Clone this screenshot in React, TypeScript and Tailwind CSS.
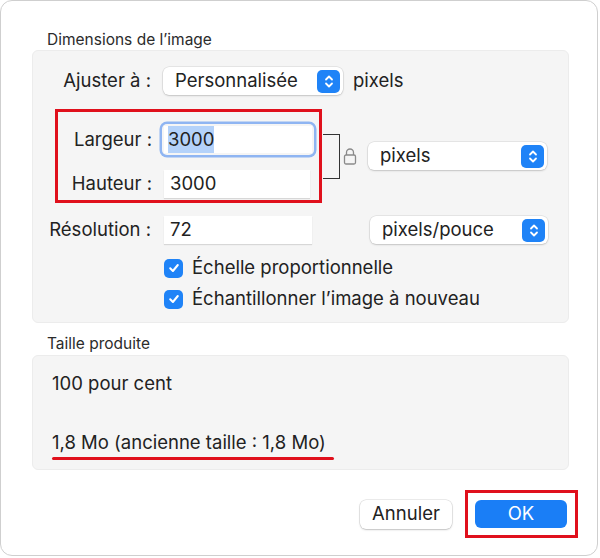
import React from "react";

const Stepper = () => (
  <span className="flex h-[23px] w-[23px] items-center justify-center rounded-[5px] bg-[#1f83f7]">
    <svg width="10" height="15" viewBox="0 0 10 15" fill="none">
      <path d="M2 5.5 L5 2.5 L8 5.5" stroke="white" strokeWidth="1.8" strokeLinecap="round" strokeLinejoin="round" />
      <path d="M2 9.5 L5 12.5 L8 9.5" stroke="white" strokeWidth="1.8" strokeLinecap="round" strokeLinejoin="round" />
    </svg>
  </span>
);

const Popup = ({ label, className }: { label: string; className: string }) => (
  <div
    className={`flex h-[28px] items-center justify-between rounded-[6px] bg-white pl-[12px] pr-[3px] shadow-[0_0_0_0.5px_rgba(0,0,0,0.12),0_1px_2px_rgba(0,0,0,0.15)] ${className}`}
  >
    <span>{label}</span>
    <Stepper />
  </div>
);

const Field = ({ value, w }: { value: string; w: string }) => (
  <div className={`flex h-[28px] items-center bg-white pl-[6px] shadow-[0_1px_1px_rgba(0,0,0,0.12)] ${w}`}>
    {value}
  </div>
);

const Check = ({ label }: { label: string }) => (
  <div className="flex h-[20px] items-center gap-[9px]">
    <span className="flex h-[19px] w-[19px] items-center justify-center rounded-[5px] bg-[#1f83f7]">
      <svg width="12" height="12" viewBox="0 0 12 12" fill="none">
        <path d="M2.2 6.3 L4.9 9 L9.8 3" stroke="white" strokeWidth="2" strokeLinecap="round" strokeLinejoin="round" />
      </svg>
    </span>
    <span>{label}</span>
  </div>
);

export default function App() {
  return (
    <div className="h-[558px] w-[600px] bg-white font-['Inter',sans-serif] text-[18.5px] text-[#222]">
      <div className="h-[556px] w-[598px] rounded-[12px] border border-[#cfcfcf] bg-white pl-[31px] pr-[28px] pt-[30px]">
        <div className="pl-[15px] text-[15.5px] leading-[18px] text-[#2b2b2b]">Dimensions de l’image</div>

        <div className="mt-[1px] w-[537px] rounded-[6px] border border-[#ececec] bg-[#f5f5f5] pb-[13px] pt-[16px]">
          <div className="flex items-center">
            <div className="w-[120px] pr-[2px] text-right">Ajuster à :</div>
            <Popup label="Personnalisée" className="ml-[10px] w-[180px]" />
            <span className="ml-[10px]">pixels</span>
          </div>

          <div className="mt-[14px] flex items-center">
            <div className="ml-[22px] w-[267px] border-[3px] border-[#e0101c] pb-[2px] pt-[12px]">
              <div className="flex items-center">
                <div className="w-[94px] text-right">Largeur :</div>
                <div className="ml-[10px] rounded-[5px] p-[2px] ring-[2.5px] ring-[#8fb5f2]">
                  <div className="flex h-[27px] w-[148px] items-center bg-white pl-[4px]">
                    <span className="bg-[#b4d2fa]">3000</span>
                  </div>
                </div>
              </div>
              <div className="mt-[15px] flex items-center">
                <div className="w-[94px] text-right">Hauteur :</div>
                <Field value="3000" w="ml-[12px] w-[146px]" />
              </div>
            </div>
            <div className="ml-[1px] h-[45px] w-[17px] border-y-[1.5px] border-r-[1.5px] border-[#333]" />
            <svg className="ml-[3px]" width="14" height="18" viewBox="0 0 14 18" fill="none">
              <path d="M3.5 8 V5.5 a3.5 3.5 0 0 1 7 0 V8" stroke="#8a8a8a" strokeWidth="1.3" />
              <rect x="1.5" y="8" width="11" height="9" rx="1.5" stroke="#8a8a8a" strokeWidth="1.3" />
            </svg>
            <Popup label="pixels" className="ml-[11px] w-[179px]" />
          </div>

          <div className="mt-[13px] flex items-center">
            <div className="w-[120px] pr-[2px] text-right">Résolution :</div>
            <Field value="72" w="ml-[11px] w-[148px]" />
            <Popup label="pixels/pouce" className="ml-[58px] w-[178px]" />
          </div>

          <div className="ml-[131px] mt-[14px] flex flex-col gap-[11px]">
            <Check label="Échelle proportionnelle" />
            <Check label="Échantillonner l’image à nouveau" />
          </div>
        </div>

        <div className="mt-[12px] pl-[15px] text-[15.5px] leading-[18px] text-[#2b2b2b]">Taille produite</div>

        <div className="mt-[2px] h-[115px] w-[537px] rounded-[6px] border border-[#ececec] bg-[#f5f5f5] pl-[19px] pt-[16px]">
          <div className="leading-[22px]">100 pour cent</div>
          <div className="mt-[37px] inline-block">
            <div className="leading-[22px]">1,8 Mo (ancienne taille : 1,8 Mo)</div>
            <div className="mt-[4px] h-[3px] w-[calc(100%+8px)] rounded-full bg-[#e0101c]" />
          </div>
        </div>

        <div className="mr-[-9px] mt-[20px] flex items-center justify-end">
          <button className="h-[29px] w-[92px] rounded-[6px] bg-white shadow-[0_0_0_0.5px_rgba(0,0,0,0.15),0_1px_2px_rgba(0,0,0,0.18)]">
            Annuler
          </button>
          <div className="ml-[13px] border-[3px] border-[#e0101c] py-[7px] pl-[7px] pr-[8px]">
            <button className="h-[28px] w-[92px] rounded-[6px] bg-[#1a7ef6] text-white">OK</button>
          </div>
        </div>
      </div>
    </div>
  );
}
